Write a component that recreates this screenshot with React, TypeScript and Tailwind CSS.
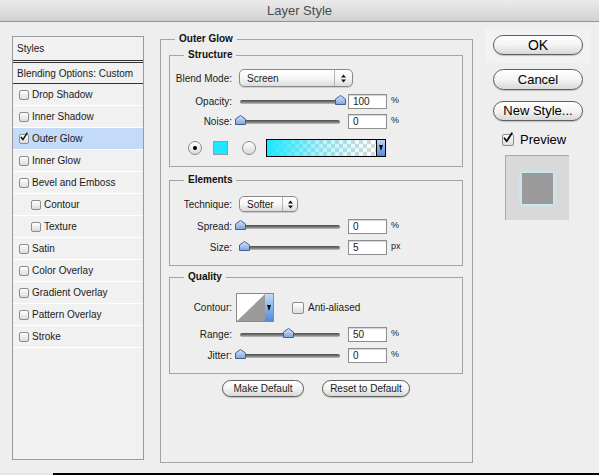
import type { ReactNode } from 'react';

interface StyleItem {
  label: string;
  checked?: boolean;
  active?: boolean;
  indent?: boolean;
}

const styleItems: StyleItem[] = [
  { label: 'Drop Shadow' },
  { label: 'Inner Shadow' },
  { label: 'Outer Glow', checked: true, active: true },
  { label: 'Inner Glow' },
  { label: 'Bevel and Emboss' },
  { label: 'Contour', indent: true },
  { label: 'Texture', indent: true },
  { label: 'Satin' },
  { label: 'Color Overlay' },
  { label: 'Gradient Overlay' },
  { label: 'Pattern Overlay' },
  { label: 'Stroke' },
];

function CheckBox({ checked = false, className = 'h-[10px] w-[10px]' }: { checked?: boolean; className?: string }) {
  return (
    <span
      className={`relative shrink-0 rounded-[2px] border border-[#8d8d8d] bg-linear-to-b from-white to-[#dcdcdc] ${className}`}
    >
      {checked && (
        <svg viewBox="0 0 12 12" className="absolute left-0 -top-[2px] h-full w-full overflow-visible">
          <path
            d="M1.8 6.4 L4.4 10 L10.6 0.2"
            fill="none"
            stroke="#111"
            strokeWidth="2.2"
            strokeLinecap="round"
            strokeLinejoin="round"
          />
        </svg>
      )}
    </span>
  );
}

function Radio({ selected = false }: { selected?: boolean }) {
  return (
    <span className="flex h-[14px] w-[14px] shrink-0 items-center justify-center rounded-full border border-[#8a8a8a] bg-linear-to-b from-white to-[#d9d9d9]">
      {selected && <span className="h-[4px] w-[4px] rounded-full bg-black" />}
    </span>
  );
}

function Stepper() {
  return (
    <svg width="5" height="9" viewBox="0 0 5 9">
      <path d="M0 3.5 L2.5 0.5 L5 3.5 Z M0 5.5 L2.5 8.5 L5 5.5 Z" fill="#111" />
    </svg>
  );
}

function Popup({ value, className, arrowClass }: { value: string; className: string; arrowClass: string }) {
  return (
    <div
      className={`ml-[7px] flex shrink-0 items-center rounded-[5px] border border-[#8a8a8a] bg-linear-to-b from-white via-[#f6f6f6] to-[#dcdcdc] shadow-[0_1px_1px_rgba(0,0,0,0.15)] ${className}`}
    >
      <span className="flex-1 pl-[7px]">{value}</span>
      <span className={`flex h-full items-center justify-center border-l border-[#b4b4b4] ${arrowClass}`}>
        <Stepper />
      </span>
    </div>
  );
}

// thumb position is the slider value in px along a 100px track
function Slider({ value }: { value: number }) {
  return (
    <div className="relative ml-[3px] h-[14px] w-[110px] shrink-0 px-[5px] pt-[6px]">
      <div className="h-[4px] rounded-full bg-linear-to-b from-[#4f4f4f] via-[#777] to-[#c2c2c2]" />
      <svg className="absolute top-[1px] h-[10px] w-[11px]" style={{ left: value - 0.5 }} viewBox="0 0 11 10">
        <path d="M0.5 4 L5.5 0.5 L10.5 4 V9.5 H0.5 Z" fill="url(#thumbFill)" stroke="#3f5f98" />
      </svg>
    </div>
  );
}

function Field({ value }: { value: string }) {
  return (
    <div className="ml-[3px] h-[15px] w-[39px] shrink-0 border border-[#8e8e8e] bg-white pl-[4px] text-[10px] leading-[13px] shadow-[inset_0_1px_1px_rgba(0,0,0,0.18)]">
      {value}
    </div>
  );
}

function Row({ label, className, children }: { label: string; className: string; children: ReactNode }) {
  return (
    <div className={`flex items-center ${className}`}>
      <span className="w-[62px] shrink-0 text-right">{label}</span>
      {children}
    </div>
  );
}

function SliderRow({ label, value, text, unit = '%', className }: { label: string; value: number; text: string; unit?: string; className: string }) {
  return (
    <Row label={label} className={`h-[14px] ${className}`}>
      <Slider value={value} />
      <Field value={text} />
      <span className="ml-[4px] text-[9px]">{unit}</span>
    </Row>
  );
}

function Group({ title, className, children }: { title: string; className: string; children: ReactNode }) {
  return (
    <fieldset className={`shrink-0 border border-[#a3a3a3] ${className}`}>
      <legend className="ml-[14px] px-[4px] text-[10px] font-bold leading-[12px] text-[#111]">{title}</legend>
      {children}
    </fieldset>
  );
}

function PillButton({ children, className }: { children: ReactNode; className: string }) {
  return (
    <button
      className={`flex items-center justify-center rounded-full border border-[#5f5f5f] bg-linear-to-b from-white via-[#f4f4f4] to-[#d8d8d8] shadow-[0_1px_1px_rgba(0,0,0,0.2)] ${className}`}
    >
      {children}
    </button>
  );
}

function StylesList() {
  return (
    <div className="ml-[12px] mt-[14px] h-[424px] w-[132px] shrink-0 border border-[#9a9a9a] bg-[#f1f1f1]">
      <div className="flex h-[24px] items-center border-b border-[#333] pl-[4px]">Styles</div>
      <div className="mt-[1px] flex h-[22px] items-center border-y border-[#333] pl-[4px]">Blending Options: Custom</div>
      {styleItems.map((item) => (
        <div
          key={item.label}
          className={`flex h-[22px] items-center gap-[3px] border-b border-white ${item.indent ? 'pl-[18px]' : 'pl-[6px]'} ${item.active ? 'bg-[#c4dbf7]' : ''}`}
        >
          <CheckBox checked={item.checked} />
          <span>{item.label}</span>
        </div>
      ))}
    </div>
  );
}

export default function App() {
  return (
    <div className="flex h-[475px] w-[599px] flex-col overflow-hidden bg-black font-['Liberation_Sans',Arial,sans-serif] text-[10px] text-[#1a1a1a]">
      <svg width="0" height="0" className="absolute">
        <defs>
          <linearGradient id="thumbFill" x1="0" y1="0" x2="0" y2="1">
            <stop offset="0" stopColor="#d6e4f8" />
            <stop offset="1" stopColor="#7ea5dd" />
          </linearGradient>
        </defs>
      </svg>

      <div className="flex h-[473px] shrink-0 flex-col bg-[#eeeeee]">
        {/* title bar */}
        <div className="flex h-[22px] shrink-0 items-center justify-center border-b border-[#939393] bg-linear-to-b from-[#ebebeb] to-[#d2d2d2] text-[13px] text-[#4b4b4b]">
          Layer Style
        </div>

        <div className="flex flex-1">
          <StylesList />

          <div className="ml-[16px] w-[313px] shrink-0">
            <Group title="Outer Glow" className="mt-[11px] h-[430px] w-[313px]">
              <div className="flex flex-col pl-[8px] pr-[9px]">
                <Group title="Structure" className="mt-[4px] h-[118px]">
                  <Row label="Blend Mode:" className="mt-[8px] h-[18px]">
                    <Popup value="Screen" className="h-[18px] w-[114px]" arrowClass="w-[18px]" />
                  </Row>
                  <SliderRow label="Opacity:" value={100} text="100" className="mt-[7px]" />
                  <SliderRow label="Noise:" value={0} text="0" className="mt-[6px]" />
                  <div className="mt-[11px] flex h-[18px] items-center pl-[18px]">
                    <Radio selected />
                    <span className="ml-[11px] h-[14px] w-[15px] border border-[#9a9a9a] bg-[#1ee6ff]" />
                    <span className="ml-[14px]">
                      <Radio />
                    </span>
                    <div className="ml-[10px] flex h-[18px] w-[120px] border border-black">
                      <div className="flex-1 bg-[repeating-conic-gradient(#d9d9d9_0_25%,#ffffff_0_50%)] bg-[length:8px_8px]">
                        <div className="h-full w-full bg-linear-to-r from-[#1ee6ff] via-[rgba(30,230,255,0.35)] to-transparent" />
                      </div>
                      <div className="flex w-[9px] items-center justify-center border-l border-black bg-linear-to-b from-[#bcd6f6] to-[#4f8bd9]">
                        <svg width="4" height="6" viewBox="0 0 4 6">
                          <path d="M0 0 H4 L2 6 Z" fill="#000" />
                        </svg>
                      </div>
                    </div>
                  </div>
                </Group>

                <Group title="Elements" className="mt-[7px] h-[92px]">
                  <Row label="Technique:" className="mt-[10px] h-[16px]">
                    <Popup value="Softer" className="h-[16px] w-[59px]" arrowClass="w-[15px]" />
                  </Row>
                  <SliderRow label="Spread:" value={0} text="0" className="mt-[7px]" />
                  <SliderRow label="Size:" value={4} text="5" unit="px" className="mt-[7px]" />
                </Group>

                <Group title="Quality" className="mt-[5px] h-[103px]">
                  <Row label="Contour:" className="mt-[10px] h-[29px]">
                    <div className="ml-[4px] flex h-[29px] w-[38px] shrink-0 border border-[#8a8a8a] bg-white">
                      <svg className="h-full flex-1" viewBox="0 0 29 27" preserveAspectRatio="none">
                        <path d="M0 27 L29 0 V27 Z" fill="#9b9b9b" />
                      </svg>
                      <div className="flex w-[8px] items-center justify-center bg-linear-to-b from-[#c4dbf7] to-[#4f8bd9]">
                        <svg width="4" height="6" viewBox="0 0 4 6">
                          <path d="M0 0 H4 L2 6 Z" fill="#000" />
                        </svg>
                      </div>
                    </div>
                    <CheckBox className="ml-[18px] h-[12px] w-[12px]" />
                    <span className="ml-[4px]">Anti-aliased</span>
                  </Row>
                  <SliderRow label="Range:" value={48} text="50" className="mt-[5px]" />
                  <SliderRow label="Jitter:" value={0} text="0" className="mt-[7px]" />
                </Group>

                <div className="mt-[6px] flex justify-center gap-[18px]">
                  <PillButton className="h-[17px] w-[82px] text-[10px]">Make Default</PillButton>
                  <PillButton className="h-[17px] w-[88px] text-[10px]">Reset to Default</PillButton>
                </div>
              </div>
            </Group>
          </div>

          {/* dialog buttons and preview */}
          <div className="ml-[20px] flex w-[90px] shrink-0 flex-col text-[13px] text-black">
            <div className="-mx-[8px] mt-[5px] bg-[#f2f2f2] px-[8px] py-[8px]">
              <PillButton className="h-[20px] w-[90px] text-[14px]">OK</PillButton>
            </div>
            <PillButton className="mt-[6px] h-[21px] w-[90px]">Cancel</PillButton>
            <PillButton className="mt-[11px] h-[20px] w-[90px]">New Style...</PillButton>
            <div className="mt-[12px] flex h-[14px] items-center pl-[9px]">
              <CheckBox checked className="h-[12px] w-[12px]" />
              <span className="ml-[6px]">Preview</span>
            </div>
            <div className="ml-[12px] mt-[8px] flex h-[65px] w-[64px] items-center justify-center border-l border-t border-[#a8a8a8] bg-[#d9d9d9]">
              <div className="h-[31px] w-[31px] bg-[#9a9a9a] shadow-[0_0_4px_1px_#bff2ff]" />
            </div>
          </div>
        </div>
      </div>

      <div className="flex h-[2px] shrink-0">
        <div className="w-[53px] bg-[#e4e4e4]" />
      </div>
    </div>
  );
}
